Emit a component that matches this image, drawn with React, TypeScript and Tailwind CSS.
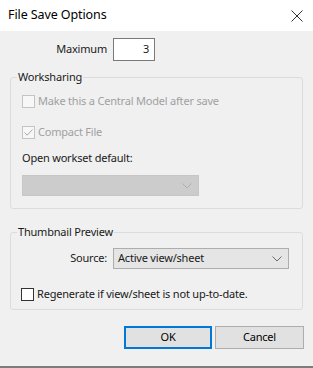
import React from "react";

const font = { fontFamily: '"Noto Sans", "Open Sans", sans-serif' };

function Check({ disabled, checked }: { disabled?: boolean; checked?: boolean }) {
  return (
    <span
      className={`w-[13px] h-[13px] shrink-0 border flex items-center justify-center ${
        disabled ? "border-[#c4c4c4] bg-[#f7f7f7]" : "border-[#333333] bg-white"
      }`}
    >
      {checked && (
        <svg width="11" height="11" viewBox="0 0 11 11">
          <path d="M1.5 5.5 L4.2 8.2 L9.5 2.5" fill="none" stroke="#a8a8a8" strokeWidth="1" />
        </svg>
      )}
    </span>
  );
}

function Chevron({ color }: { color: string }) {
  return (
    <svg width="10" height="6" viewBox="0 0 10 6">
      <path d="M0.5 0.5 L5 5 L9.5 0.5" fill="none" stroke={color} strokeWidth="1" />
    </svg>
  );
}

export default function App() {
  return (
    <div
      className="w-[313px] h-[368px] bg-[#f0f0f0] flex flex-col border-b-2 border-[#7c7c7c] text-[11px] tracking-[-0.2px] text-[#1a1a1a] overflow-hidden"
      style={font}
    >
      {/* Title bar */}
      <div className="h-[31px] shrink-0 bg-white flex items-center justify-between pl-[8px] pr-[10px]">
        <span className="text-[12.5px] tracking-[-0.1px] text-black leading-none">File Save Options</span>
        <svg width="12" height="12" viewBox="0 0 12 12">
          <path d="M0.5 0.5 L11.5 11.5 M11.5 0.5 L0.5 11.5" stroke="#333" strokeWidth="1" />
        </svg>
      </div>

      {/* Maximum */}
      <div className="flex items-center mt-[7px] h-[23px]">
        <span className="w-[108px] pr-[1px] text-right whitespace-nowrap">Maximum</span>
        <div className="ml-[5px] w-[42px] h-[23px] border border-[#7a7a7a] bg-white flex items-center justify-end pr-[5px]">
          3
        </div>
      </div>

      {/* Worksharing */}
      <fieldset className="mx-[10px] mt-[8px] border border-[#dcdcdc] rounded-[3px] px-[11px] pb-[12px]">
        <legend className="ml-[-5px] px-[1px] leading-[16px]">Worksharing</legend>
        <div className="flex items-center gap-[3px] h-[16px] mt-[8px] text-[#a0a0a0]">
          <Check disabled />
          <span className="whitespace-nowrap">Make this a Central Model after save</span>
        </div>
        <div className="flex items-center gap-[3px] h-[16px] mt-[15px] text-[#a0a0a0]">
          <Check disabled checked />
          <span>Compact File</span>
        </div>
        <div className="h-[16px] leading-[16px] mt-[10px]">Open workset default:</div>
        <div className="mt-[9px] w-[177px] h-[21px] bg-[#cccccc] border border-[#c6c6c6] flex items-center justify-end pr-[6px]">
          <Chevron color="#b0b0b0" />
        </div>
      </fieldset>

      {/* Thumbnail Preview */}
      <fieldset className="mx-[10px] mt-[15px] border border-[#dcdcdc] rounded-[3px] px-[10px] pb-[7px]">
        <legend className="ml-[-4px] px-[1px] leading-[16px]">Thumbnail Preview</legend>
        <div className="flex items-center mt-[8px]">
          <span className="w-[87px] pr-[1px] text-right whitespace-nowrap">Source:</span>
          <div className="ml-[5px] w-[176px] h-[21px] bg-[#e5e5e5] border border-[#adadad] flex items-center justify-between pl-[4px] pr-[6px]">
            <span>Active view/sheet</span>
            <Chevron color="#6a6a6a" />
          </div>
        </div>
        <div className="flex items-center gap-[3px] h-[16px] mt-[17px]">
          <Check />
          <span className="whitespace-nowrap">Regenerate if view/sheet is not up-to-date.</span>
        </div>
      </fieldset>

      {/* Buttons */}
      <div className="flex justify-end gap-[3px] mt-[16px] pr-[9px]">
        <button className="w-[88px] h-[23px] bg-[#e1e1e1] border border-[#0078d7] outline outline-1 -outline-offset-2 outline-[#0078d7] text-[11px] text-black">
          OK
        </button>
        <button className="w-[89px] h-[23px] bg-[#e1e1e1] border border-[#adadad] text-[11px] text-black">
          Cancel
        </button>
      </div>
      <div className="flex-1" />
    </div>
  );
}
